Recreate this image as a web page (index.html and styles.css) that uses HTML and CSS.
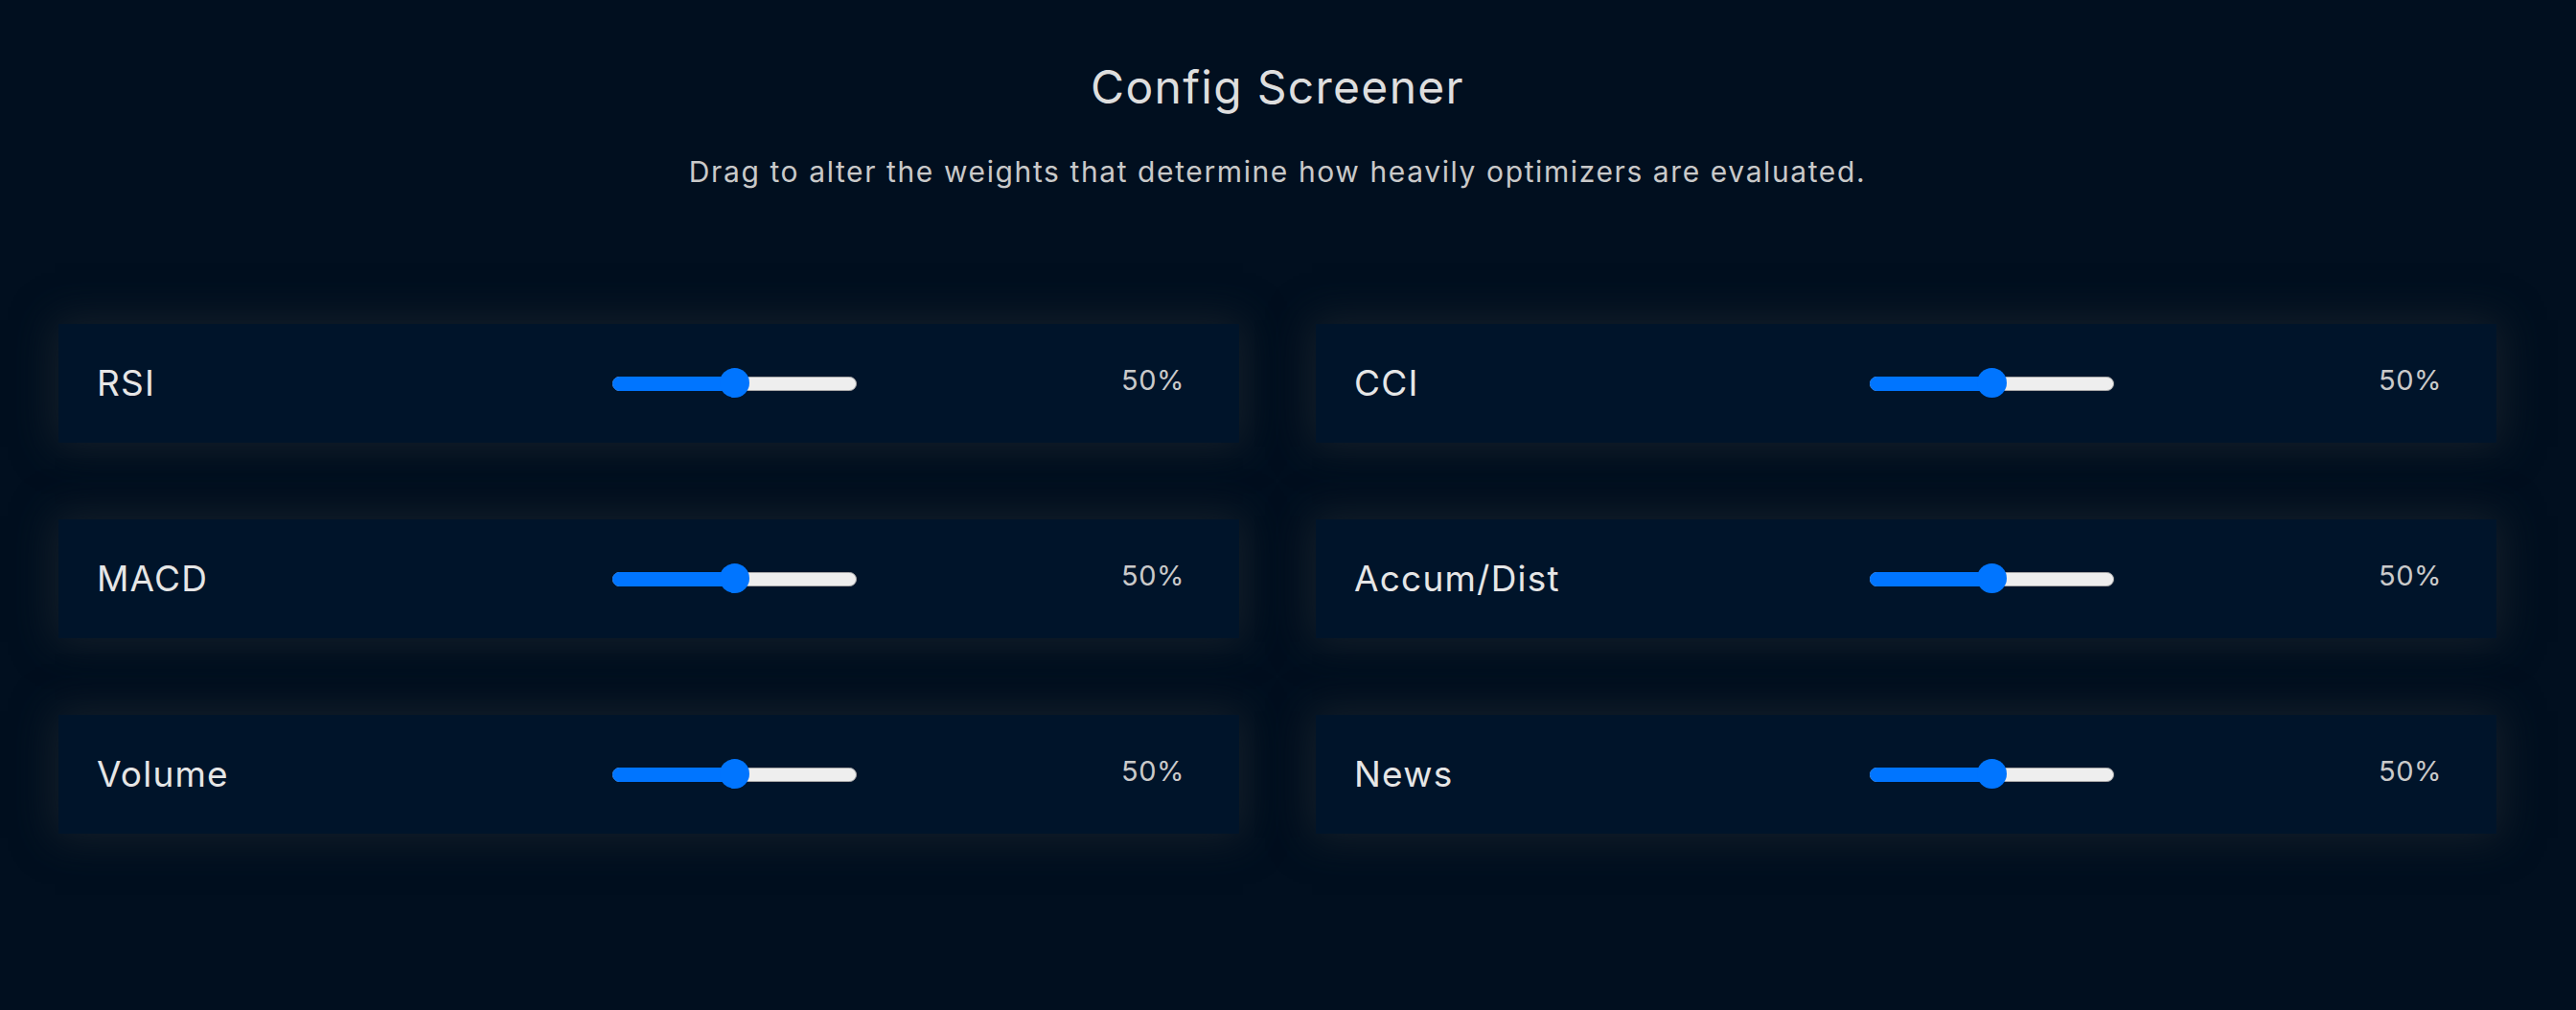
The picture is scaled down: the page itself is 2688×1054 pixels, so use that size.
FILE: index.html
```html
<!DOCTYPE html>
<html lang="en">
<head>
<meta charset="utf-8">
<title>Config Screener</title>
<link rel="stylesheet" href="styles.css">
</head>
<body>
<main class="page">
  <h1 class="title">Config Screener</h1>
  <p class="subtitle">Drag to alter the weights that determine how heavily optimizers are evaluated.</p>
  <section class="grid">
    <div class="card">
      <span class="label">RSI</span>
      <div class="slider"><div class="fill" style="width:50%"></div><div class="thumb" style="left:50%"></div></div>
      <span class="pct">50%</span>
    </div>
    <div class="card">
      <span class="label">CCI</span>
      <div class="slider"><div class="fill" style="width:50%"></div><div class="thumb" style="left:50%"></div></div>
      <span class="pct">50%</span>
    </div>
    <div class="card">
      <span class="label">MACD</span>
      <div class="slider"><div class="fill" style="width:50%"></div><div class="thumb" style="left:50%"></div></div>
      <span class="pct">50%</span>
    </div>
    <div class="card">
      <span class="label">Accum/Dist</span>
      <div class="slider"><div class="fill" style="width:50%"></div><div class="thumb" style="left:50%"></div></div>
      <span class="pct">50%</span>
    </div>
    <div class="card">
      <span class="label">Volume</span>
      <div class="slider"><div class="fill" style="width:50%"></div><div class="thumb" style="left:50%"></div></div>
      <span class="pct">50%</span>
    </div>
    <div class="card">
      <span class="label">News</span>
      <div class="slider"><div class="fill" style="width:50%"></div><div class="thumb" style="left:50%"></div></div>
      <span class="pct">50%</span>
    </div>
  </section>
</main>
</body>
</html>
```

FILE: styles.css
```css
html, body {
  margin: 0;
  padding: 0;
  background: #010f1f;
  height: 100%;
}
body {
  font-family: Inter, "Open Sans", "Liberation Sans", sans-serif;
  overflow: hidden;
}
.page {
  padding: 62px 83px 0 61px;
  display: flex;
  flex-direction: column;
  align-items: stretch;
}
.title {
  margin: 0;
  text-align: center;
  font-size: 48px;
  line-height: 58px;
  font-weight: 400;
  color: #dedede;
  letter-spacing: 1.3px;
}
.subtitle {
  margin: 41px 0 0 0;
  text-align: center;
  font-size: 30px;
  line-height: 36px;
  font-weight: 400;
  color: #c9c9c9;
  letter-spacing: 1.6px;
}
.grid {
  margin-top: 141px;
  display: grid;
  grid-template-columns: 1fr 1fr;
  column-gap: 80px;
  row-gap: 80px;
}
.card {
  height: 124px;
  background: #00142a;
  box-shadow: 0 0 40px 4px rgb(22, 32, 42);
  display: grid;
  grid-template-columns: 538px 255px 1fr;
  align-items: center;
  padding: 0 57px 0 40px;
}
.label {
  font-size: 37px;
  color: #e6e6e6;
  line-height: 44px;
  letter-spacing: 1.2px;
}
.slider {
  position: relative;
  height: 15px;
  box-sizing: border-box;
  border-radius: 8px;
  background: #eeeeee;
  border: 1px solid #a9a9a9;
}
.fill {
  position: absolute;
  left: -1px;
  top: -1px;
  bottom: -1px;
  background: #0075ff;
  border-radius: 8px 0 0 8px;
}
.thumb {
  position: absolute;
  top: 50%;
  width: 31px;
  height: 31px;
  margin-left: -16px;
  margin-top: -16px;
  border-radius: 50%;
  background: #0075ff;
}
.pct {
  justify-self: end;
  font-size: 29px;
  line-height: 36px;
  color: #cacaca;
  letter-spacing: 0.5px;
  margin-bottom: 6px;
}
```
